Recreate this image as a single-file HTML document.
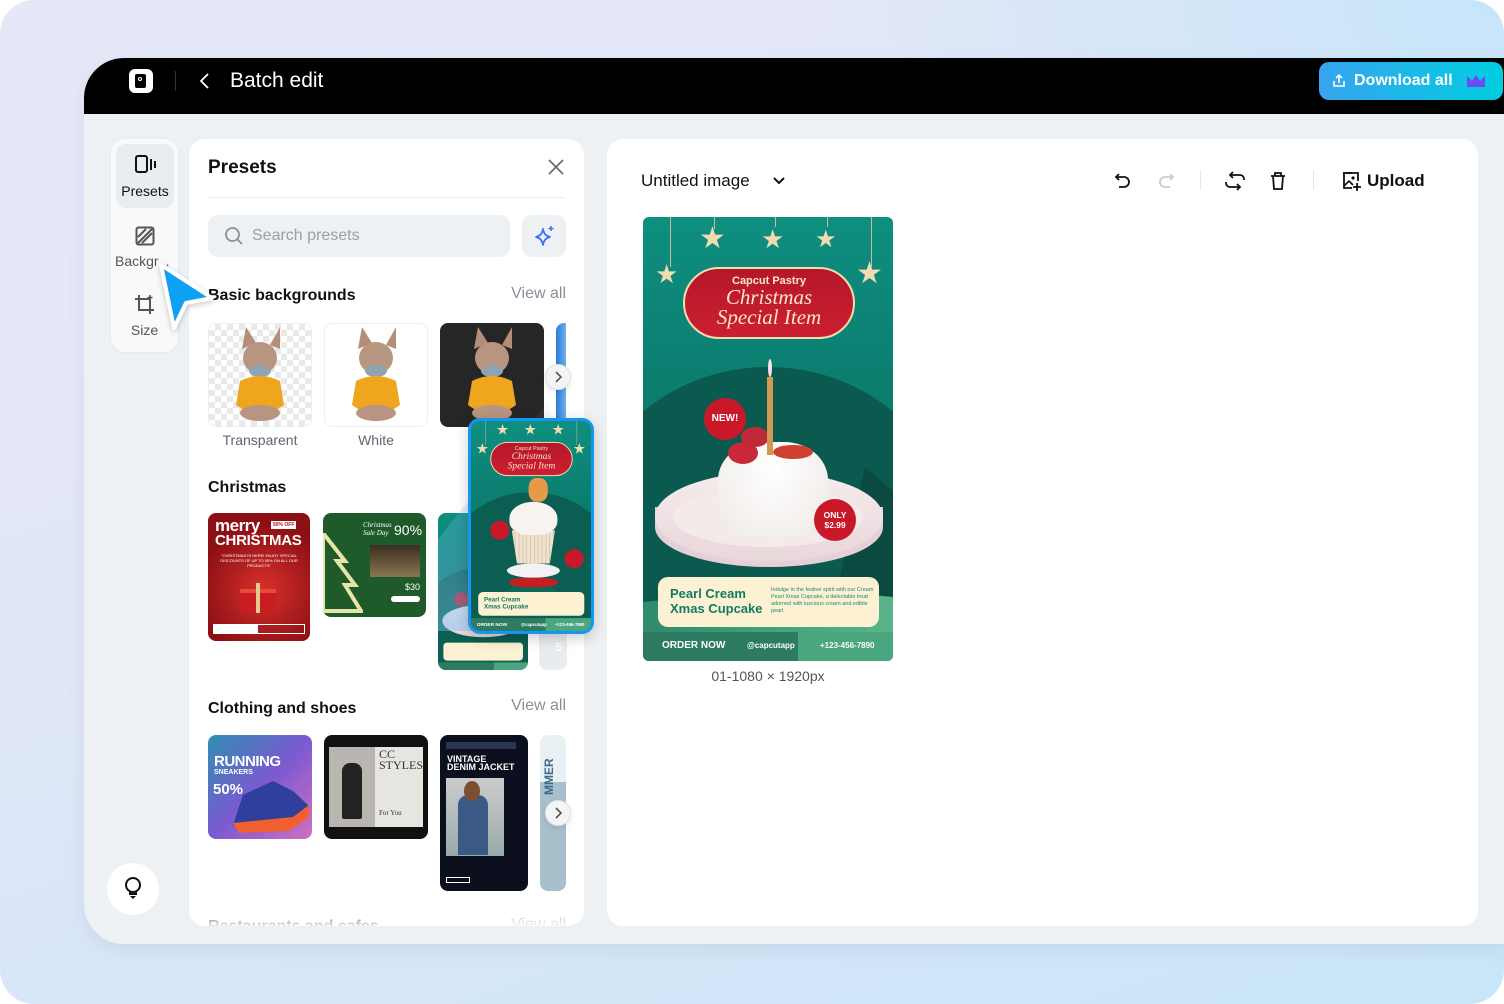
<!DOCTYPE html>
<html><head><meta charset="utf-8"><style>
*{box-sizing:border-box;margin:0;padding:0}
html,body{width:1504px;height:1004px;overflow:hidden;background:#fff;font-family:"Liberation Sans",sans-serif}
.page{position:absolute;left:0;top:0;width:1504px;height:1004px;border-radius:34px;background:linear-gradient(160deg,#e6e8f8 0%,#e2e7f7 40%,#d6e6f8 70%,#c8e6f8 100%);overflow:hidden}
.page:before{content:"";position:absolute;right:0;top:0;width:700px;height:400px;background:radial-gradient(ellipse at 100% 0%,#c6e5f9 0%,rgba(200,230,249,0) 70%)}
.win{position:absolute;left:84px;top:58px;width:1430px;height:886px;border-radius:40px 0 0 40px;background:#eef1f4;overflow:hidden;box-shadow:0 6px 20px rgba(0,0,0,.06)}
.bar{position:absolute;left:0;top:0;right:0;height:56px;background:#000}
.abs{position:absolute}
.card{background:#fff;border-radius:16px;position:absolute}
.h{font-weight:bold;color:#111;font-size:16px}
.va{position:absolute;right:18px;color:#8a9099;font-size:16px}
.thumb{position:absolute;border-radius:8px;overflow:hidden}
.lbl{position:absolute;color:#5f6670;font-size:14px;text-align:center;width:104px}
.arrowbtn{position:absolute;width:26px;height:26px;border-radius:50%;background:#f2f4f6;border:1px solid #dfe3e8;box-shadow:0 2px 6px rgba(0,0,0,.1);display:flex;align-items:center;justify-content:center}
.poster{position:absolute;width:250px;height:444px;background:linear-gradient(180deg,#0e8f80 0%,#0b7a6c 45%,#0a6256 70%,#0e6d5e 100%);overflow:hidden;transform-origin:0 0}
.poster .arc{position:absolute;left:-60px;top:150px;width:370px;height:340px;border-radius:50%;background:#0b5e52}
.poster .pill{position:absolute;left:40px;top:50px;width:172px;height:72px;border-radius:36px;background:linear-gradient(180deg,#b5182a,#cc1f30);border:2px solid #f0dcb0;text-align:center;color:#fbe7c6}
.poster .star{position:absolute;color:#efdcb0;font-size:30px;line-height:1}
.poster .str{position:absolute;width:1px;background:#cbbd99;top:0}
.poster .plate{position:absolute;left:12px;top:255px;width:228px;height:90px;border-radius:50%;background:linear-gradient(180deg,#f6ecee,#e8d6da);}
.poster .plate2{position:absolute;left:12px;top:290px;width:228px;height:60px;border-radius:0 0 114px 114px/0 0 40px 40px;background:#e4d0d6}
.poster .cake{position:absolute;left:75px;top:225px;width:110px;height:95px;border-radius:40% 40% 20% 20%;background:radial-gradient(ellipse at 50% 30%,#fff,#eee9e6)}
.poster .red{position:absolute;border-radius:50%;background:#c8182a;color:#fff;font-weight:bold;text-align:center}
.poster .box{position:absolute;left:15px;top:360px;width:221px;height:50px;border-radius:10px;background:#fcf1d2}
.poster .foot{position:absolute;left:0;top:415px;width:250px;height:29px;background:linear-gradient(90deg,#2d7b60 0 62%,#4aa67e 62%);color:#fff;font-size:9px;font-weight:bold}
</style></head><body>
<div class="page">
<div class="win">
  <div class="bar">
    <div class="abs" style="left:45px;top:11px;width:24px;height:24px;background:#fff;border-radius:6px"><div class="abs" style="left:6px;top:5px;width:11px;height:14px;background:#000;border-radius:2px"></div><div class="abs" style="left:9px;top:8px;width:4px;height:4px;border-radius:50%;border:1.2px solid #fff"></div></div>
    <div class="abs" style="left:91px;top:13px;width:1px;height:20px;background:#333"></div>
    <svg class="abs" style="left:114px;top:14px" width="14" height="18" viewBox="0 0 14 18"><path d="M10 2 L3 9 L10 16" stroke="#fff" stroke-width="1.8" fill="none"/></svg>
    <div class="abs" style="left:146px;top:11px;color:#fff;font-size:21px">Batch edit</div>
    <div class="abs" style="left:1235px;top:4px;width:184px;height:38px;border-radius:10px;background:linear-gradient(90deg,#37a4ef,#00cde0);color:#fff;font-size:16px;font-weight:bold;line-height:38px;padding-left:35px">Download all
      <svg class="abs" style="left:12px;top:11px" width="16" height="16" viewBox="0 0 16 16"><path d="M8 10V2M5 5l3-3 3 3M3 8v5h10V8" stroke="#fff" stroke-width="1.6" fill="none"/></svg>
      <svg class="abs" style="left:147px;top:12px" width="20" height="14" viewBox="0 0 20 14"><path d="M1 2l5 5 4-6 4 6 5-5v11H1z" fill="#6a4cf0"/></svg>
    </div>
  </div>
  <div class="abs" style="left:27px;top:81px;width:67px;height:213px;background:#f8f9fb;border-radius:14px;box-shadow:0 1px 4px rgba(0,0,0,.05)"></div>
  <div class="abs" style="left:32px;top:86px;width:58px;height:64px;background:#e9ecf0;border-radius:10px"></div>
  <svg class="abs" style="left:50px;top:96px" width="24" height="22" viewBox="0 0 24 22"><rect x="2" y="2" width="11" height="16" rx="2" stroke="#111" stroke-width="2" fill="none"/><path d="M17 5v11M21 7v7" stroke="#111" stroke-width="2"/></svg>
  <div class="abs" style="left:32px;top:125px;width:58px;text-align:center;font-size:14px;color:#111">Presets</div>
  <svg class="abs" style="left:51px;top:168px" width="20" height="20" viewBox="0 0 20 20"><rect x="1.5" y="1.5" width="17" height="17" rx="2" stroke="#555" stroke-width="2" fill="none"/><path d="M3 11L11 3M7 17L17 7M3 17L17 3" stroke="#555" stroke-width="2"/></svg>
  <div class="abs" style="left:31px;top:195px;font-size:14px;color:#555">Backgr...</div>
  <svg class="abs" style="left:50px;top:236px" width="22" height="22" viewBox="0 0 22 22"><path d="M5 1v15h15M1 5h15v15" stroke="#555" stroke-width="2" fill="none"/><path d="M16 1v5M13.5 3.5h5" stroke="#555" stroke-width="1.6"/></svg>
  <div class="abs" style="left:27px;top:264px;width:67px;text-align:center;font-size:14px;color:#555">Size</div>
  <div class="abs" style="left:23px;top:805px;width:52px;height:52px;border-radius:50%;background:#fff"></div>
  <svg class="abs" style="left:38px;top:818px" width="22" height="26" viewBox="0 0 22 26"><circle cx="11" cy="9" r="7" stroke="#111" stroke-width="2" fill="none"/><path d="M8 15v3h6v-3" stroke="#111" stroke-width="2" fill="none"/><path d="M8 20h6l-3 3z" fill="#111"/></svg>

  <div class="card" style="left:105px;top:81px;width:395px;height:787px;overflow:hidden">
    <div class="abs h" style="left:19px;top:18px;font-size:19px">Presets</div>
    <svg class="abs" style="left:359px;top:20px" width="16" height="16" viewBox="0 0 16 16"><path d="M1 1l14 14M15 1L1 15" stroke="#666" stroke-width="1.6"/></svg>
    <div class="abs" style="left:19px;top:58px;width:357px;height:1px;background:#eceef1"></div>
    <div class="abs" style="left:19px;top:76px;width:302px;height:42px;background:#eef1f4;border-radius:10px"></div>
    <svg class="abs" style="left:35px;top:87px" width="20" height="20" viewBox="0 0 20 20"><circle cx="8.5" cy="8.5" r="6.5" stroke="#8a9099" stroke-width="1.8" fill="none"/><path d="M13 13l5 5" stroke="#8a9099" stroke-width="1.8"/></svg>
    <div class="abs" style="left:63px;top:88px;color:#9aa0a8;font-size:16px">Search presets</div>
    <div class="abs" style="left:333px;top:76px;width:44px;height:42px;background:#eef1f4;border-radius:10px"></div>
    <svg class="abs" style="left:345px;top:86px" width="22" height="22" viewBox="0 0 22 22"><path d="M9 4c1 5 3 7 7 8-4 1-6 3-7 8-1-5-3-7-7-8 4-1 6-3 7-8z" stroke="#3b6ef5" stroke-width="1.8" fill="none" stroke-linejoin="round"/><path d="M17 1v5M14.5 3.5h5" stroke="#3b6ef5" stroke-width="1.5"/></svg>

    <div class="abs h" style="left:19px;top:148px">Basic backgrounds</div>
    <div class="va" style="top:146px">View all</div>
    <div class="thumb" style="left:19px;top:184px;width:104px;height:104px;border:1px solid #eee;background:repeating-conic-gradient(#e9e9e9 0 25%,#fff 0 50%) 0 0/12px 12px"></div>
    <div class="thumb" style="left:135px;top:184px;width:104px;height:104px;border:1px solid #eee;background:#fff"></div>
    <div class="thumb" style="left:251px;top:184px;width:104px;height:104px;background:#262626"></div>
    <div class="thumb" style="left:367px;top:184px;width:10px;height:104px;border-radius:8px 0 0 8px;background:linear-gradient(90deg,#2e7bd6,#6cb0ec)"></div>
    <svg class="abs" style="left:19px;top:184px" width="340" height="104" viewBox="0 0 340 104">
      <g id="dog"><path d="M34 26l4-22 10 16zM62 22l10-18 0 22z" fill="#b58e78"/><ellipse cx="52" cy="35" rx="17" ry="16" fill="#b89580"/><ellipse cx="52" cy="48" rx="11" ry="6" fill="#8fa4b0"/><path d="M32 58q20-10 40 0l4 24-6 4H34l-6-4z" fill="#f0a51e"/><ellipse cx="52" cy="90" rx="20" ry="8" fill="#b89580"/></g>
      <use href="#dog" x="116"/><use href="#dog" x="232"/>
    </svg>
    <div class="arrowbtn" style="left:356px;top:225px"><svg width="8" height="12" viewBox="0 0 8 12"><path d="M2 1l5 5-5 5" stroke="#555" stroke-width="1.6" fill="none"/></svg></div>
    <div class="lbl" style="left:19px;top:293px">Transparent</div>
    <div class="lbl" style="left:135px;top:293px">White</div>

    <div class="abs h" style="left:19px;top:340px">Christmas</div>
    <div class="thumb" style="left:19px;top:374px;width:102px;height:128px;background:radial-gradient(circle at 55% 60%,#d8302c,#8c0f14 70%);color:#fff">
      <div class="abs" style="left:7px;top:3px;font-weight:bold;font-size:17px;letter-spacing:-.5px">merry</div>
      <div class="abs" style="left:63px;top:8px;background:#fff;color:#b0101a;font-size:5px;padding:1px 2px;font-weight:bold">50% OFF</div>
      <div class="abs" style="left:7px;top:19px;font-weight:bold;font-size:15px;letter-spacing:-.3px">CHRISTMAS</div>
      <div class="abs" style="left:10px;top:40px;width:82px;font-size:4px;text-align:center;line-height:5px">"CHRISTMAS IS HERE! ENJOY SPECIAL DISCOUNTS OF UP TO 50% ON ALL OUR PRODUCTS"</div>
      <div class="abs" style="left:32px;top:76px;width:36px;height:24px;background:#c81d22;border-top:4px solid #e84a3a"></div>
      <div class="abs" style="left:48px;top:70px;width:4px;height:30px;background:#e6c98a"></div>
      <div class="abs" style="left:5px;top:111px;width:92px;height:10px;border:1px solid #fff;"><div style="width:44px;height:8px;background:#fff"></div></div>
    </div>
    <div class="thumb" style="left:134px;top:374px;width:103px;height:104px;background:#1f5a2a">
      <svg class="abs" style="left:0;top:20px" width="40" height="80" viewBox="0 0 40 80"><path d="M0 0l22 28h-8l18 24h-10l16 26H0z" fill="none" stroke="#e8e3a8" stroke-width="4"/></svg>
      <div class="abs" style="left:40px;top:8px;color:#fff;font-size:7px;font-style:italic;font-family:'Liberation Serif',serif">Christmas<br>Sale Day</div>
      <div class="abs" style="left:71px;top:9px;color:#fff;font-size:14px">90%</div>
      <div class="abs" style="left:47px;top:32px;width:50px;height:32px;background:linear-gradient(#3a2e20,#8a7650)"></div>
      <div class="abs" style="left:82px;top:69px;color:#fff;font-size:9px">$30</div>
      <div class="abs" style="left:68px;top:83px;width:29px;height:6px;background:#fff;border-radius:3px"></div>
    </div>
    <div class="thumb" style="left:249px;top:374px;width:90px;height:157px;background:#0e7f72">
      <div class="poster" style="transform:scale(.36);left:0;top:0"><div class="arc"></div><div class="plate"></div><div class="box"></div><div class="foot"></div><div class="red" style="left:45px;top:220px;width:40px;height:40px"></div></div>
    </div>
    <div class="thumb" style="left:350px;top:374px;width:28px;height:157px;background:linear-gradient(160deg,#c22030 40%,#e8ecef 40%)"><div class="abs" style="left:16px;top:127px;color:#fff;font-weight:bold;font-size:12px">5</div></div>

    <div class="abs h" style="left:19px;top:561px">Clothing and shoes</div>
    <div class="va" style="top:558px">View all</div>
    <div class="thumb" style="left:19px;top:596px;width:104px;height:104px;background:linear-gradient(135deg,#2f8fb0,#7a5ad0 50%,#d070c0)">
      <div class="abs" style="left:6px;top:18px;color:#fff;font-weight:bold;font-size:15px;letter-spacing:-.5px">RUNNING</div>
      <div class="abs" style="left:6px;top:34px;color:#fff;font-weight:bold;font-size:7px">SNEAKERS</div>
      <div class="abs" style="left:5px;top:46px;color:#fff;font-weight:bold;font-size:15px">50%</div>
      <svg class="abs" style="left:15px;top:40px" width="90" height="60" viewBox="0 0 90 60"><path d="M20 20l30-14 20 10 15 14-5 14-40 12-30-6z" fill="#2e3f9c"/><path d="M10 48l60-6 16-12 0 12-20 14-50 2z" fill="#f06030"/></svg>
    </div>
    <div class="thumb" style="left:135px;top:596px;width:104px;height:104px;background:#111">
      <div class="abs" style="left:5px;top:12px;width:46px;height:80px;background:#b9b6b1"></div>
      <div class="abs" style="left:51px;top:12px;width:48px;height:80px;background:#e7e5e0"></div>
      <div class="abs" style="left:18px;top:28px;width:20px;height:56px;background:#222;border-radius:8px 8px 2px 2px"></div>
      <div class="abs" style="left:55px;top:14px;font-family:'Liberation Serif',serif;font-size:12px;line-height:11px;color:#333">CC<br>STYLES</div>
      <div class="abs" style="left:55px;top:74px;font-family:'Liberation Serif',serif;font-size:7px;color:#333">For You</div>
    </div>
    <div class="thumb" style="left:251px;top:596px;width:88px;height:156px;background:#0b0f1e;color:#fff">
      <div class="abs" style="left:6px;top:7px;width:70px;height:7px;background:#2a3550"></div>
      <div class="abs" style="left:7px;top:20px;font-weight:bold;font-size:9px;line-height:8px">VINTAGE<br>DENIM JACKET</div>
      <div class="abs" style="left:6px;top:43px;width:58px;height:78px;background:linear-gradient(#ccc,#9aa)"></div>
      <div class="abs" style="left:18px;top:60px;width:30px;height:60px;background:#3a5a85;border-radius:10px 10px 0 0"></div>
      <div class="abs" style="left:24px;top:46px;width:16px;height:20px;background:#7a5030;border-radius:50%"></div>
      <div class="abs" style="left:6px;top:142px;width:24px;height:6px;border:1px solid #fff"></div>
    </div>
    <div class="thumb" style="left:351px;top:596px;width:26px;height:156px;background:linear-gradient(#e8f0f4 0 30%,#a8c0cc 30%)"><div class="abs" style="left:2px;top:60px;color:#3c6a88;font-weight:bold;font-size:12px;transform:rotate(-90deg);transform-origin:0 0">MMER</div></div>
    <div class="arrowbtn" style="left:356px;top:661px"><svg width="8" height="12" viewBox="0 0 8 12"><path d="M2 1l5 5-5 5" stroke="#555" stroke-width="1.6" fill="none"/></svg></div>
    <div class="abs h" style="left:19px;top:779px">Restaurants and cafes</div>
    <div class="va" style="top:777px">View all</div>
    <div class="abs" style="left:0;top:770px;width:395px;height:17px;background:linear-gradient(rgba(255,255,255,.3),rgba(255,255,255,.9))"></div>
  </div>

  <!-- highlight fan + enlarged card -->
  <div class="abs" style="left:354px;top:343px;width:130px;height:230px;background:linear-gradient(180deg,rgba(120,190,240,.05),rgba(120,190,240,.45));clip-path:polygon(85% 0,100% 100%,0 100%,0 60%)"></div>
  <div class="abs" style="left:384px;top:360px;width:126px;height:216px;border:3px solid #1496f2;border-radius:12px;overflow:hidden;background:#0e8f80;box-shadow:0 4px 14px rgba(0,0,0,.2)">
    <div class="poster" style="transform:scale(.48,.475);left:0;top:0">
      <div class="arc"></div>
      <div class="str" style="left:30px;height:50px"></div><div class="str" style="left:220px;height:50px"></div>
      <div class="star" style="left:52px;top:4px">★</div><div class="star" style="left:110px;top:4px">★</div><div class="star" style="left:168px;top:4px">★</div><div class="star" style="left:10px;top:44px">★</div><div class="star" style="left:212px;top:44px">★</div>
      <div class="pill" style="top:44px;height:72px"><div style="font-size:11px;margin-top:6px">Capcut Pastry</div><div style="font-family:'Liberation Serif',serif;font-style:italic;font-size:20px;line-height:20px">Christmas<br>Special Item</div></div>
      <div class="abs" style="left:25px;top:330px;width:200px;height:50px;background:#0b6a58;clip-path:polygon(50% 0,100% 100%,0 100%)"></div>
      <div class="abs" style="left:75px;top:300px;width:110px;height:30px;border-radius:50%;background:#f2f2f2"></div>
      <div class="abs" style="left:85px;top:230px;width:90px;height:70px;background:repeating-linear-gradient(90deg,#efe2cf 0 6px,#dcc8ae 6px 8px);clip-path:polygon(0 0,100% 0,88% 100%,12% 100%)"></div>
      <div class="abs" style="left:80px;top:170px;width:100px;height:70px;border-radius:50% 50% 40% 40%;background:#f7f4ef"></div>
      <div class="abs" style="left:120px;top:120px;width:40px;height:50px;background:#e59a4a;border-radius:40%"></div>
      <div class="abs" style="left:80px;top:330px;width:100px;height:20px;background:#c81d22;border-radius:40%"></div>
      <div class="red" style="left:40px;top:210px;width:40px;height:40px"></div>
      <div class="red" style="left:195px;top:270px;width:40px;height:40px"></div>
      <div class="box"><div style="color:#0f7a62;font-weight:bold;font-size:13px;margin:8px 0 0 12px;line-height:15px">Pearl Cream<br>Xmas Cupcake</div></div>
      <div class="foot"><span class="abs" style="left:12px;top:9px;font-size:10px">ORDER NOW</span><span class="abs" style="left:104px;top:9px">@capcutapp</span><span class="abs" style="left:175px;top:9px">+123-456-7890</span></div>
    </div>
  </div>

  <div class="card" style="left:523px;top:81px;width:871px;height:787px">
    <div class="abs" style="left:34px;top:32px;font-size:17px;color:#111">Untitled image</div>
    <svg class="abs" style="left:165px;top:37px" width="14" height="10" viewBox="0 0 14 10"><path d="M2 2l5 5 5-5" stroke="#111" stroke-width="2" fill="none"/></svg>
    <svg class="abs" style="left:507px;top:33px" width="18" height="18" viewBox="0 0 18 18"><path d="M5 2L2 5l3 3M2 5h8a5 5 0 010 10H5" stroke="#111" stroke-width="1.8" fill="none"/></svg>
    <svg class="abs" style="left:550px;top:33px" width="18" height="18" viewBox="0 0 18 18"><path d="M13 2l3 3-3 3M16 5H8a5 5 0 000 10h5" stroke="#c8ccd2" stroke-width="1.8" fill="none"/></svg>
    <div class="abs" style="left:593px;top:31px;width:1px;height:20px;background:#e2e5e9"></div>
    <svg class="abs" style="left:617px;top:32px" width="22" height="20" viewBox="0 0 22 20"><path d="M7 4h9a4 4 0 014 4v1M15 16H6a4 4 0 01-4-4v-1M9 1L6 4l3 3M13 13l3 3-3 3" stroke="#111" stroke-width="1.8" fill="none"/></svg>
    <svg class="abs" style="left:662px;top:32px" width="18" height="20" viewBox="0 0 18 20"><path d="M2 5h14M6 5V2h6v3M4 5l1 13h8l1-13" stroke="#111" stroke-width="1.8" fill="none"/></svg>
    <div class="abs" style="left:706px;top:31px;width:1px;height:20px;background:#e2e5e9"></div>
    <svg class="abs" style="left:734px;top:32px" width="21" height="21" viewBox="0 0 21 21"><path d="M11 2H3v15h8" stroke="#111" stroke-width="1.8" fill="none"/><path d="M2 2h15v8" stroke="#111" stroke-width="1.8" fill="none"/><path d="M3 15l5-5 4 4" stroke="#111" stroke-width="1.6" fill="none"/><circle cx="12" cy="7" r="1.6" fill="#111"/><path d="M16 12v8M12 16h8" stroke="#111" stroke-width="1.8"/></svg>
    <div class="abs" style="left:760px;top:32px;font-size:17px;font-weight:bold;color:#111">Upload</div>

    <div class="poster" style="left:36px;top:78px;border-radius:6px">
      <div class="arc" style="background:#0b5a4f"></div>
      <div class="str" style="left:27px;height:50px"></div><div class="str" style="left:71px;height:12px"></div><div class="str" style="left:132px;height:10px"></div><div class="str" style="left:184px;height:10px"></div><div class="str" style="left:228px;height:50px"></div>
      <div class="star" style="left:56px;top:7px">★</div><div class="star" style="left:118px;top:9px;font-size:26px">★</div><div class="star" style="left:172px;top:11px;font-size:24px">★</div><div class="star" style="left:12px;top:44px;font-size:26px">★</div><div class="star" style="left:213px;top:42px">★</div>
      <div class="pill"><div style="font-size:11px;font-weight:bold;margin-top:6px">Capcut Pastry</div><div style="font-family:'Liberation Serif',serif;font-style:italic;font-size:21px;line-height:20px">Christmas<br>Special Item</div></div>
      <div class="abs" style="left:190px;top:250px;width:80px;height:140px;background:#0a4a40;clip-path:polygon(40% 0,100% 30%,100% 100%,0 100%)"></div>
      <div class="abs" style="left:0;top:370px;width:250px;height:50px;background:linear-gradient(90deg,#2f8a6e,#5ab58a);clip-path:polygon(0 30%,60% 0,100% 20%,100% 100%,0 100%)"></div>
      <div class="plate2"></div>
      <div class="plate"></div>
      <div class="abs" style="left:30px;top:270px;width:190px;height:60px;border-radius:50%;background:#f4eaea"></div>
      <div class="cake"></div>
      <div class="abs" style="left:85px;top:225px;width:30px;height:22px;border-radius:50%;background:#c8283a"></div>
      <div class="abs" style="left:130px;top:228px;width:40px;height:14px;border-radius:50%;background:#d0402e"></div>
      <div class="abs" style="left:98px;top:210px;width:28px;height:20px;border-radius:50%;background:#c02a36"></div>
      <div class="abs" style="left:124px;top:160px;width:6px;height:78px;background:#d09850"></div>
      <div class="abs" style="left:125px;top:142px;width:4px;height:18px;border-radius:50%;background:#fbe0e6"></div>
      <div class="red" style="left:61px;top:181px;width:42px;height:42px;font-size:10px;line-height:42px">NEW!</div>
      <div class="red" style="left:171px;top:282px;width:42px;height:42px;font-size:8.5px;line-height:10px;padding-top:11px">ONLY<br>$2.99</div>
      <div class="box"><div class="abs" style="left:12px;top:9px;color:#127c62;font-weight:bold;font-size:13px;line-height:15px">Pearl Cream<br>Xmas Cupcake</div><div class="abs" style="left:113px;top:10px;width:104px;color:#1f8a6c;font-size:5.5px;line-height:7px">Indulge in the festive spirit with our Cream Pearl Xmas Cupcake, a delectable treat adorned with luscious cream and edible pearl.</div></div>
      <div class="foot"><span class="abs" style="left:19px;top:8px;font-size:10px">ORDER NOW</span><span class="abs" style="left:104px;top:9px;font-size:8px">@capcutapp</span><span class="abs" style="left:177px;top:9px;font-size:8px">+123-456-7890</span></div>
    </div>
    <div class="abs" style="left:36px;top:529px;width:250px;text-align:center;font-size:14px;color:#555">01-1080 × 1920px</div>
  </div>

  <svg class="abs" style="left:70px;top:200px" width="70" height="80" viewBox="0 0 70 80"><path d="M7 7 L58 40 L32 45 L20 70 Z" fill="#0ea0f2" stroke="#fff" stroke-width="4" stroke-linejoin="round" filter="drop-shadow(0 2px 3px rgba(0,0,0,.2))"/></svg>
</div>
</div>
</body></html>
